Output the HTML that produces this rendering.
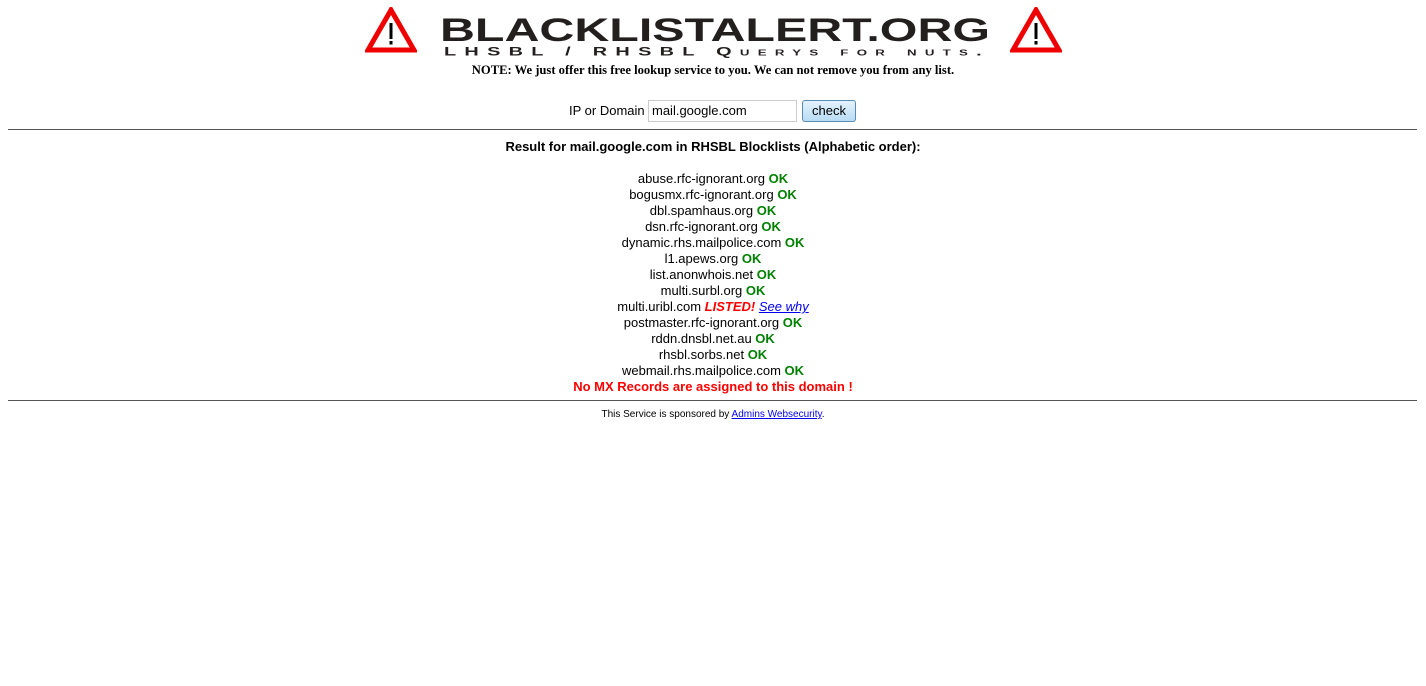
<!DOCTYPE html>
<html><head><meta charset="utf-8"><style>
body{margin:0;width:1426px;height:686px;background:#fff;font-family:"Liberation Sans",Arial,sans-serif;position:relative;overflow:hidden}
.a{position:absolute}
.c{left:0;width:1426px;text-align:center}
hr{position:absolute;left:8px;width:1409px;margin:0;border:0;border-top:1px solid #555;height:0}
.ok{color:#008000;font-weight:bold}
.list{font-size:13px;line-height:16px;color:#000}
a{color:#00e}
</style></head><body>
<svg class="a" style="left:365px;top:7px" width="52" height="46" viewBox="0 0 52 46">
<polygon points="26,3 49,43 3,43" fill="#fff" stroke="#e00" stroke-width="5" stroke-linejoin="miter"/>
<rect x="24.5" y="16" width="3" height="16" fill="#000"/><rect x="24.5" y="34" width="3" height="3.5" fill="#000"/></svg>
<svg class="a" style="left:1010px;top:7px" width="52" height="46" viewBox="0 0 52 46">
<polygon points="26,3 49,43 3,43" fill="#fff" stroke="#e00" stroke-width="5" stroke-linejoin="miter"/>
<rect x="24.5" y="16" width="3" height="16" fill="#000"/><rect x="24.5" y="34" width="3" height="3.5" fill="#000"/></svg>
<svg class="a" style="left:438px;top:12px" width="556" height="48">
<text x="2" y="29" font-family="Liberation Sans,sans-serif" font-weight="bold" font-size="32" fill="#231f1f" textLength="550" lengthAdjust="spacingAndGlyphs">BLACKLISTALERT.ORG</text>
<text x="6" y="43.5" font-family="Liberation Sans,sans-serif" font-weight="bold" font-size="12" fill="#231f1f" letter-spacing="5" style="font-variant:small-caps" textLength="546" lengthAdjust="spacingAndGlyphs">LHSBL / RHSBL Querys for nuts.</text>
</svg>
<div class="a c" style="top:63px;font-family:'Liberation Serif',serif;font-weight:bold;font-size:12.6px;">NOTE: We just offer this free lookup service to you. We can not remove you from any list.</div>
<div class="a" style="left:569px;top:103px;font-size:13px">IP or Domain</div>
<div class="a" style="left:648px;top:100px;border:1px solid #ccc;font-size:13px;line-height:20px;padding-left:3px;box-sizing:border-box;width:149px;height:22px">mail.google.com</div>
<div class="a" style="left:802px;top:100px;width:54px;height:22px;border:1px solid #5a8bb0;border-radius:3px;background:linear-gradient(#e4f2fc,#b8dcf4);box-sizing:border-box;font-size:13px;text-align:center;line-height:20px">check</div>
<hr style="top:129px">
<div class="a c" style="top:139px;font-size:13px;font-weight:bold">Result for mail.google.com in RHSBL Blocklists (Alphabetic order):</div>
<div class="a c list" style="top:171px">
abuse.rfc-ignorant.org <span class="ok">OK</span><br>
bogusmx.rfc-ignorant.org <span class="ok">OK</span><br>
dbl.spamhaus.org <span class="ok">OK</span><br>
dsn.rfc-ignorant.org <span class="ok">OK</span><br>
dynamic.rhs.mailpolice.com <span class="ok">OK</span><br>
l1.apews.org <span class="ok">OK</span><br>
list.anonwhois.net <span class="ok">OK</span><br>
multi.surbl.org <span class="ok">OK</span><br>
multi.uribl.com <b style="color:#f00;font-style:italic">LISTED!</b> <a href="#" style="font-style:italic">See why</a><br>
postmaster.rfc-ignorant.org <span class="ok">OK</span><br>
rddn.dnsbl.net.au <span class="ok">OK</span><br>
rhsbl.sorbs.net <span class="ok">OK</span><br>
webmail.rhs.mailpolice.com <span class="ok">OK</span><br>
<b style="color:#f00">No MX Records are assigned to this domain !</b>
</div>
<hr style="top:400px">
<div class="a c" style="top:409px;font-size:10px">This Service is sponsored by <a href="#">Admins Websecurity</a>.</div>
</body></html>
